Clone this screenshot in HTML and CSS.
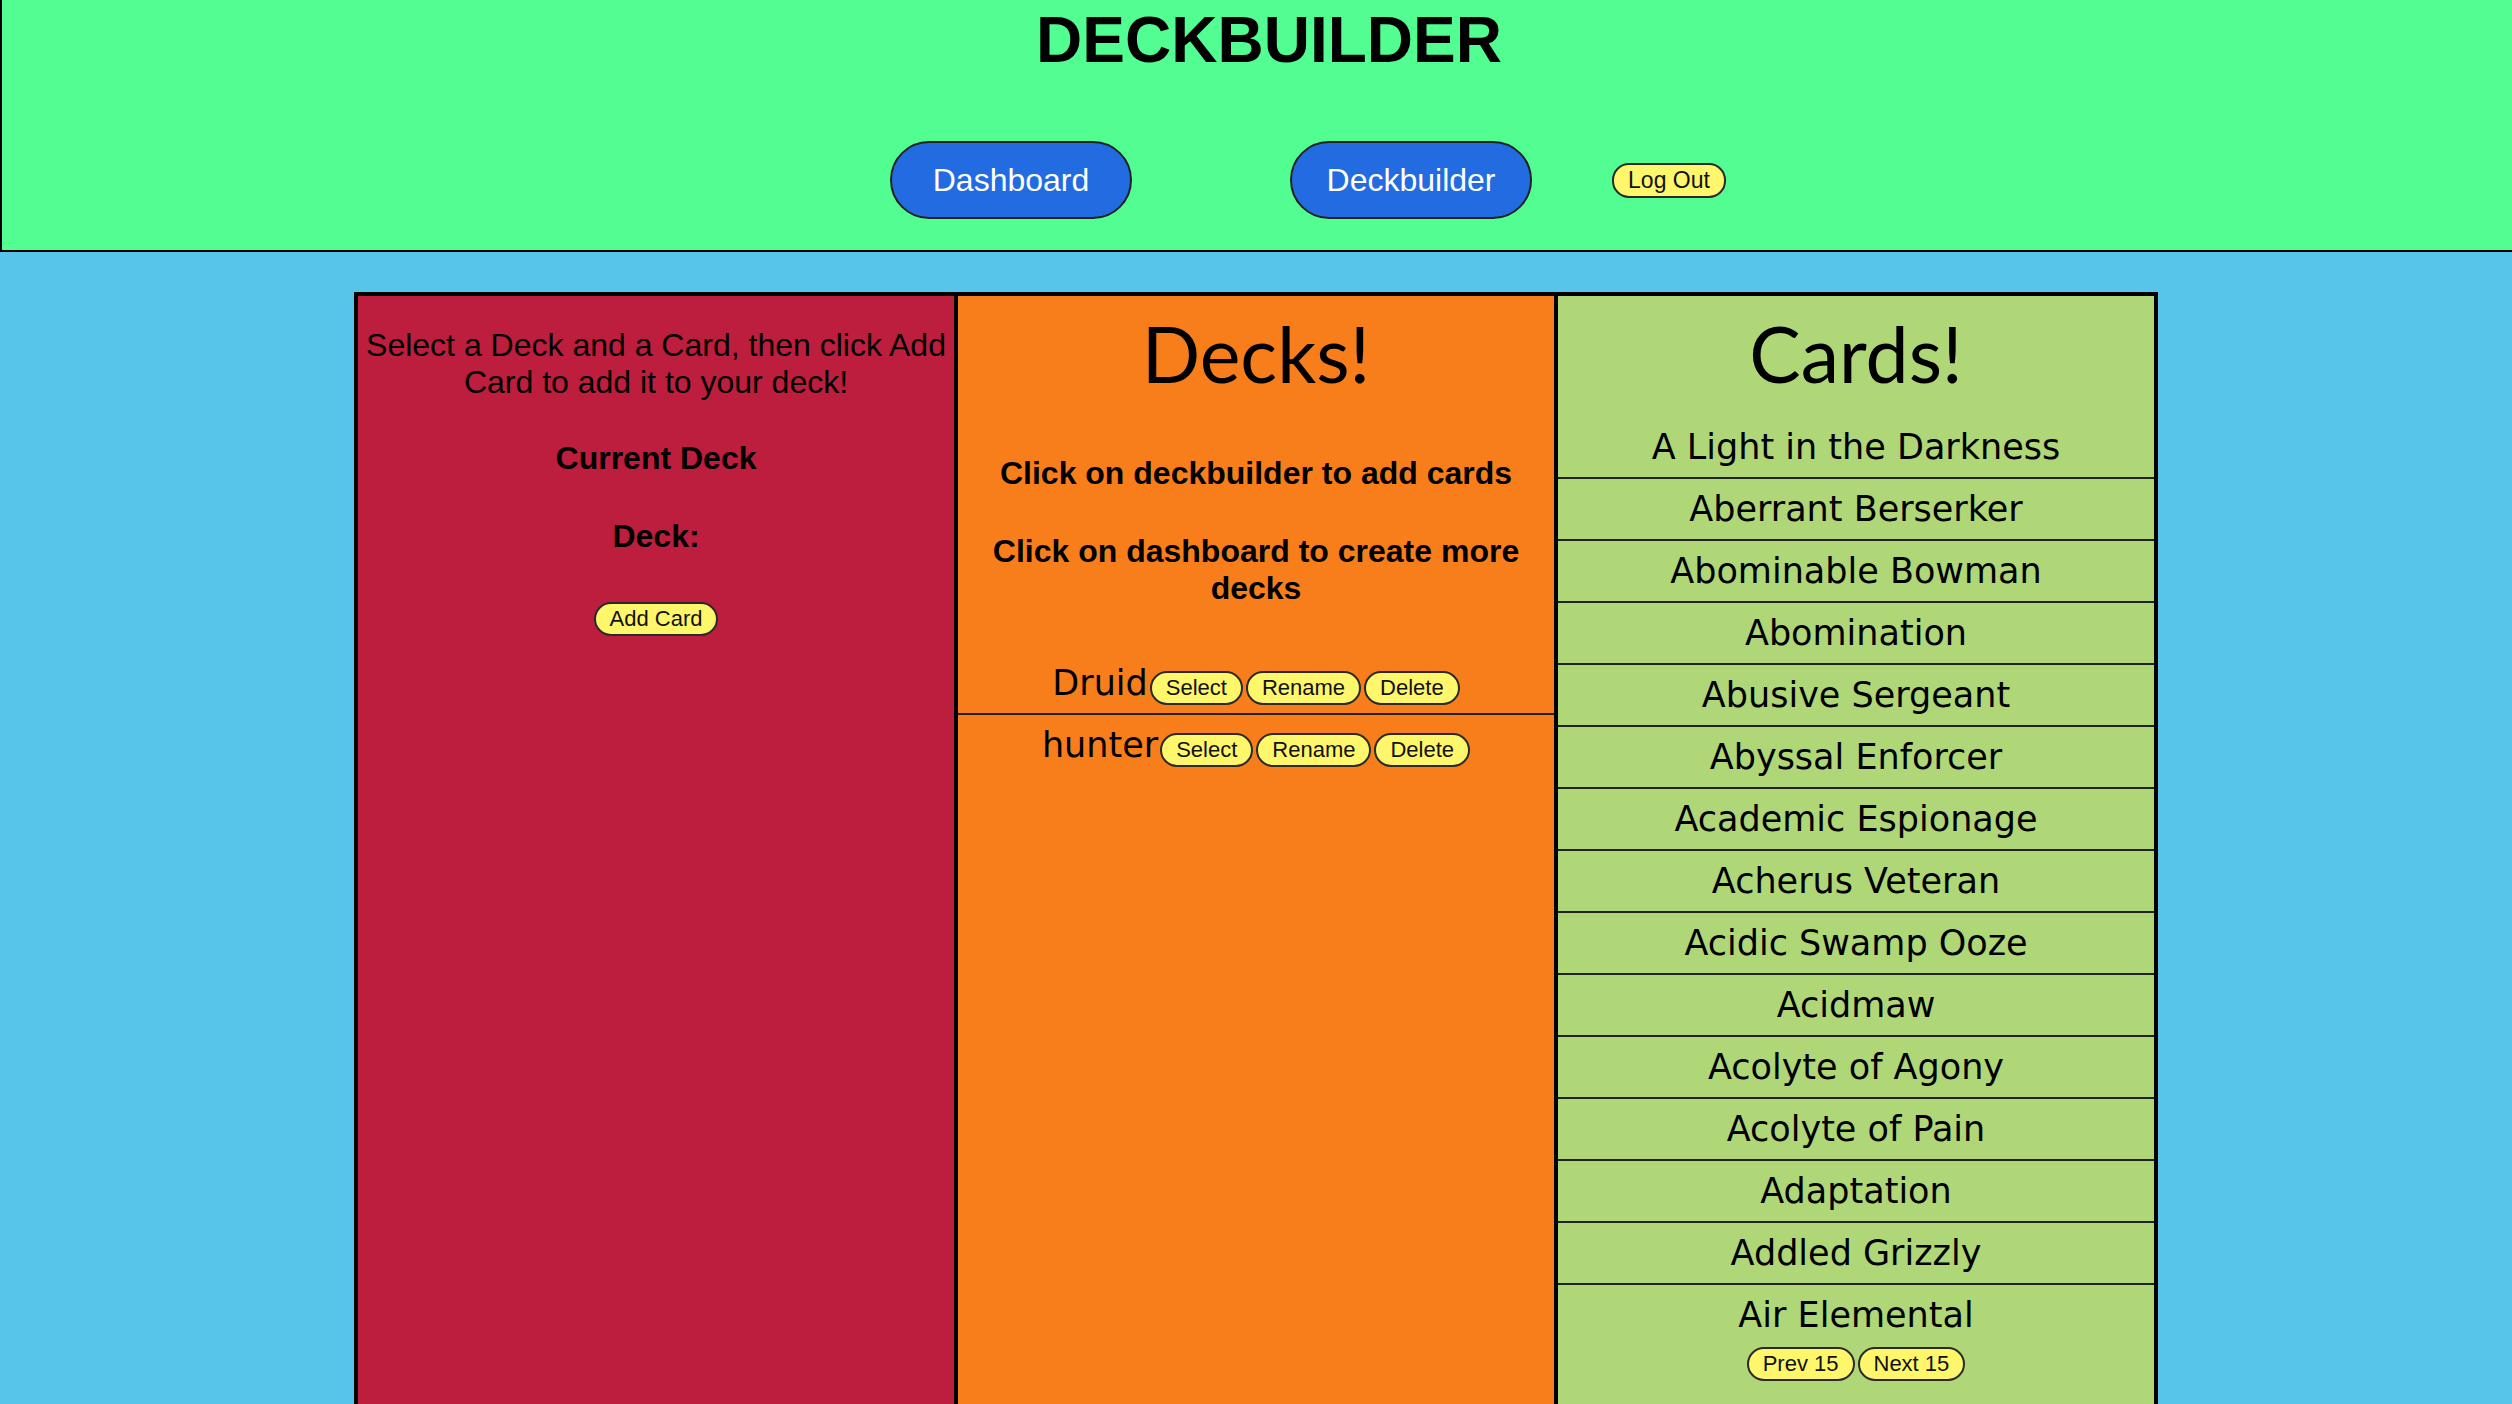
FILE: index.html
```html
<!DOCTYPE html>
<html lang="en">
<head>
<meta charset="utf-8">
<title>Deckbuilder</title>
<link rel="stylesheet" href="styles.css">
</head>
<body>
<header class="site-header">
  <h1 class="site-title">DECKBUILDER</h1>
  <nav class="site-nav">
    <button class="nav-btn nav-dashboard">Dashboard</button>
    <button class="nav-btn nav-builder">Deckbuilder</button>
    <button class="pill logout">Log Out</button>
  </nav>
</header>

<main class="board">
  <section class="col col-red">
    <p class="intro">Select a Deck and a Card, then click Add Card to add it to your deck!</p>
    <h4 class="label label-current">Current Deck</h4>
    <h4 class="label label-deck">Deck:</h4>
    <div class="add-wrap"><button class="pill">Add Card</button></div>
  </section>

  <section class="col col-orange">
    <h2 class="col-title">Decks!</h2>
    <h4 class="label hint-1">Click on deckbuilder to add cards</h4>
    <h4 class="label hint-2">Click on dashboard to create more decks</h4>
    <ul class="deck-list">
      <li class="row deck-row">Druid<button class="pill">Select</button><button class="pill">Rename</button><button class="pill">Delete</button></li>
      <li class="row deck-row">hunter<button class="pill">Select</button><button class="pill">Rename</button><button class="pill">Delete</button></li>
    </ul>
  </section>

  <section class="col col-green">
    <h2 class="col-title">Cards!</h2>
    <ul class="card-list">
      <li class="row">A Light in the Darkness</li>
      <li class="row">Aberrant Berserker</li>
      <li class="row">Abominable Bowman</li>
      <li class="row">Abomination</li>
      <li class="row">Abusive Sergeant</li>
      <li class="row">Abyssal Enforcer</li>
      <li class="row">Academic Espionage</li>
      <li class="row">Acherus Veteran</li>
      <li class="row">Acidic Swamp Ooze</li>
      <li class="row">Acidmaw</li>
      <li class="row">Acolyte of Agony</li>
      <li class="row">Acolyte of Pain</li>
      <li class="row">Adaptation</li>
      <li class="row">Addled Grizzly</li>
      <li class="row">Air Elemental</li>
    </ul>
    <div class="pager">
      <button class="pill">Prev 15</button><button class="pill">Next 15</button>
    </div>
  </section>
</main>
</body>
</html>
```

FILE: styles.css
```css
* {
  box-sizing: border-box;
}

html,
body {
  margin: 0;
  padding: 0;
}

body {
  background: #57c5ea;
  font-family: "Liberation Sans", Arial, sans-serif;
  color: #000;
  height: 1404px;
  overflow: hidden;
}

/* ---------- header ---------- */
.site-header {
  background: #52fe92;
  border-left: 2px solid #000;
  border-bottom: 2px solid #000;
  height: 252px;
  padding-top: 3px;
}

.site-title {
  margin: 0;
  padding-left: 24px;
  text-align: center;
  font-size: 64px;
  line-height: 74px;
  font-weight: bold;
}

.site-nav {
  display: flex;
  justify-content: center;
  align-items: center;
  margin-top: 64px;
  padding-left: 102px;
}

.nav-btn {
  width: 242px;
  height: 78px;
  padding: 0;
  border: 2px solid #222;
  border-radius: 39px;
  background: #236be0;
  color: #fff;
  font-family: "Liberation Sans", Arial, sans-serif;
  font-size: 32px;
  line-height: 37px;
}

.nav-dashboard {
  margin-right: 158px;
}

.nav-builder {
  margin-right: 80px;
}

/* ---------- pill buttons ---------- */
.pill {
  display: inline-block;
  vertical-align: baseline;
  height: 34px;
  padding: 0 14px;
  border: 2px solid #2a2a2a;
  border-radius: 17px;
  background: #fff76b;
  color: #111;
  font-family: "Liberation Sans", Arial, sans-serif;
  font-size: 22px;
  line-height: 30px;
}

.logout {
  width: 114px;
  height: 35px;
  padding: 0;
  font-size: 23px;
}

/* ---------- board ---------- */
.board {
  display: grid;
  grid-template-columns: repeat(3, 600px);
  width: 1804px;
  margin: 40px auto 0;
  border: 2px solid #000;
  border-bottom: none;
}

.col {
  border: 2px solid #000;
  border-bottom: none;
  min-height: 1150px;
  text-align: center;
}

.col-red {
  background: #bd1e3e;
}

.col-orange {
  background: #f77e1b;
}

.col-green {
  background: #afd677;
}

.intro {
  margin: 31px 0 0;
  font-size: 32px;
  line-height: 37px;
}

.label {
  margin: 0;
  font-size: 32px;
  line-height: 37px;
  font-weight: bold;
}

.label-current {
  margin-top: 39px;
}

.label-deck {
  margin-top: 41px;
}

.add-wrap {
  margin-top: 47px;
}

.col-title {
  margin: 11px 0 0;
  font-family: Lato, "DejaVu Sans", sans-serif;
  font-weight: normal;
  font-size: 77px;
  line-height: 92px;
}

.hint-1 {
  margin-top: 56px;
}

.hint-2 {
  margin-top: 41px;
}

/* ---------- lists ---------- */
.deck-list,
.card-list {
  list-style: none;
  margin: 0;
  padding: 0;
}

.deck-list {
  margin-top: 46px;
}

.card-list {
  margin-top: 18px;
}

.row {
  font-family: "DejaVu Sans", Verdana, sans-serif;
  font-size: 35px;
  line-height: 60px;
  height: 60px;
  white-space: nowrap;
}

.row + .row {
  border-top: 2px solid #222;
  height: 62px;
}

.deck-row .pill {
  margin-left: 3px;
}

.deck-row .pill:first-of-type {
  margin-left: 2px;
}

.pager {
  display: flex;
  justify-content: center;
  gap: 3px;
  margin-top: 2px;
}
```
